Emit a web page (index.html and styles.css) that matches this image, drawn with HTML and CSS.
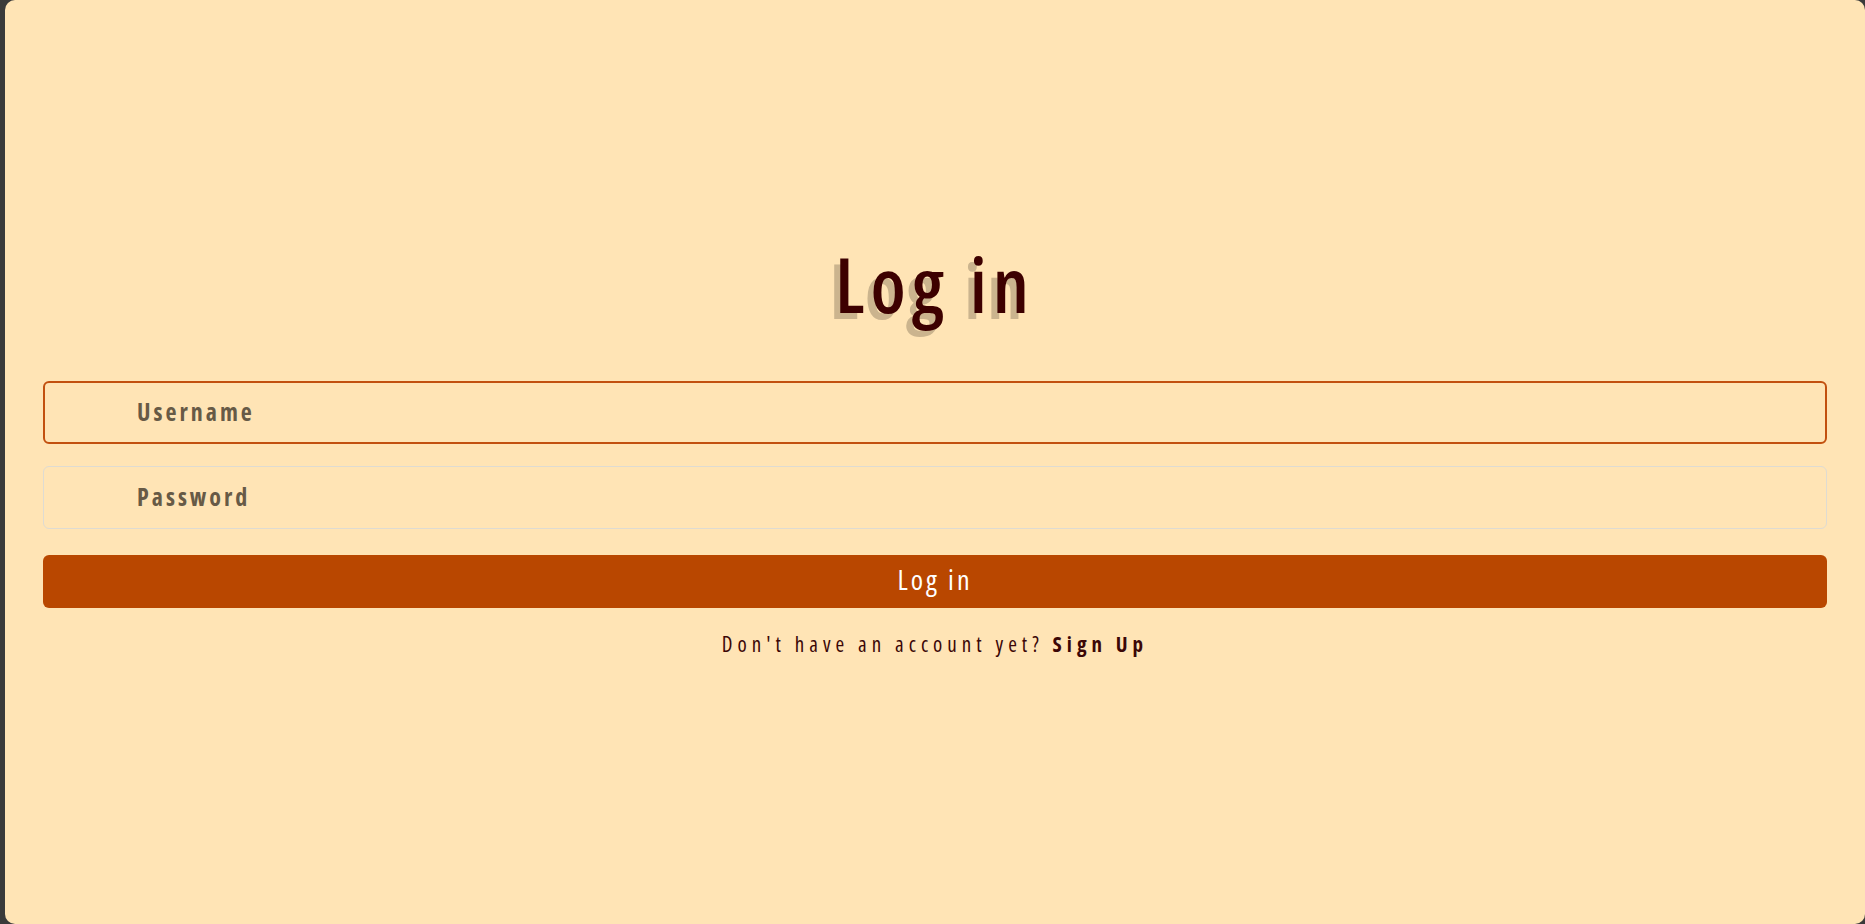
FILE: index.html
```html
<!DOCTYPE html>
<html lang="en">
<head>
<meta charset="utf-8">
<title>Log in</title>
<link rel="stylesheet" href="styles.css">
</head>
<body>
<main class="page">
  <h1 class="title">Log in</h1>
  <form class="form">
    <input class="field field-focus" type="text" placeholder="Username">
    <input class="field" type="password" placeholder="Password">
    <button class="btn" type="button">Log in</button>
  </form>
  <p class="footer">Don't have an account yet? <a class="link" href="#">Sign Up</a></p>
</main>
</body>
</html>
```

FILE: styles.css
```css
html, body {
  margin: 0;
  padding: 0;
  height: 100%;
}
body {
  background: #3a3a3a;
  font-family: "Open Sans", "DejaVu Sans", sans-serif;
  font-stretch: 75%;
  overflow: hidden;
}
.page {
  box-sizing: border-box;
  margin-left: 5px;
  height: 924px;
  background: #ffe4b5;
  border-radius: 10px;
  padding: 246px 38px 0;
  display: flex;
  flex-direction: column;
}
.title {
  margin: 0 0 59px;
  text-align: center;
  font-size: 76px;
  line-height: 1;
  font-weight: 600;
  letter-spacing: 6px;
  color: #3d0000;
  text-shadow: -6px 6px 0 #cbb48e;
}
.form {
  display: flex;
  flex-direction: column;
}
.field {
  box-sizing: border-box;
  height: 63px;
  width: 100%;
  margin: 0 0 22px;
  padding: 0 20px 2px 93px;
  background: transparent;
  border: 1px solid #dedbd2;
  border-radius: 6px;
  font-family: inherit;
  font-stretch: 75%;
  font-size: 24px;
  font-weight: 700;
  letter-spacing: 3px;
  color: #3d0000;
  outline: none;
}
.field::placeholder {
  color: #675a46;
  opacity: 1;
}
.field-focus {
  border: 2px solid #c2500f;
  padding-left: 92px;
}
.btn {
  box-sizing: border-box;
  margin-top: 4px;
  height: 53px;
  width: 100%;
  padding: 0 0 6px;
  border: none;
  border-radius: 6px;
  background: #b94700;
  color: #ffffff;
  font-family: inherit;
  font-stretch: 75%;
  font-size: 28px;
  font-weight: 500;
  letter-spacing: 3px;
  cursor: pointer;
}
.footer {
  margin: 22px 0 0;
  text-align: center;
  font-size: 21px;
  letter-spacing: 5px;
  color: #3b0707;
}
.link {
  color: #3b0707;
  font-weight: 700;
  text-decoration: none;
}
```
